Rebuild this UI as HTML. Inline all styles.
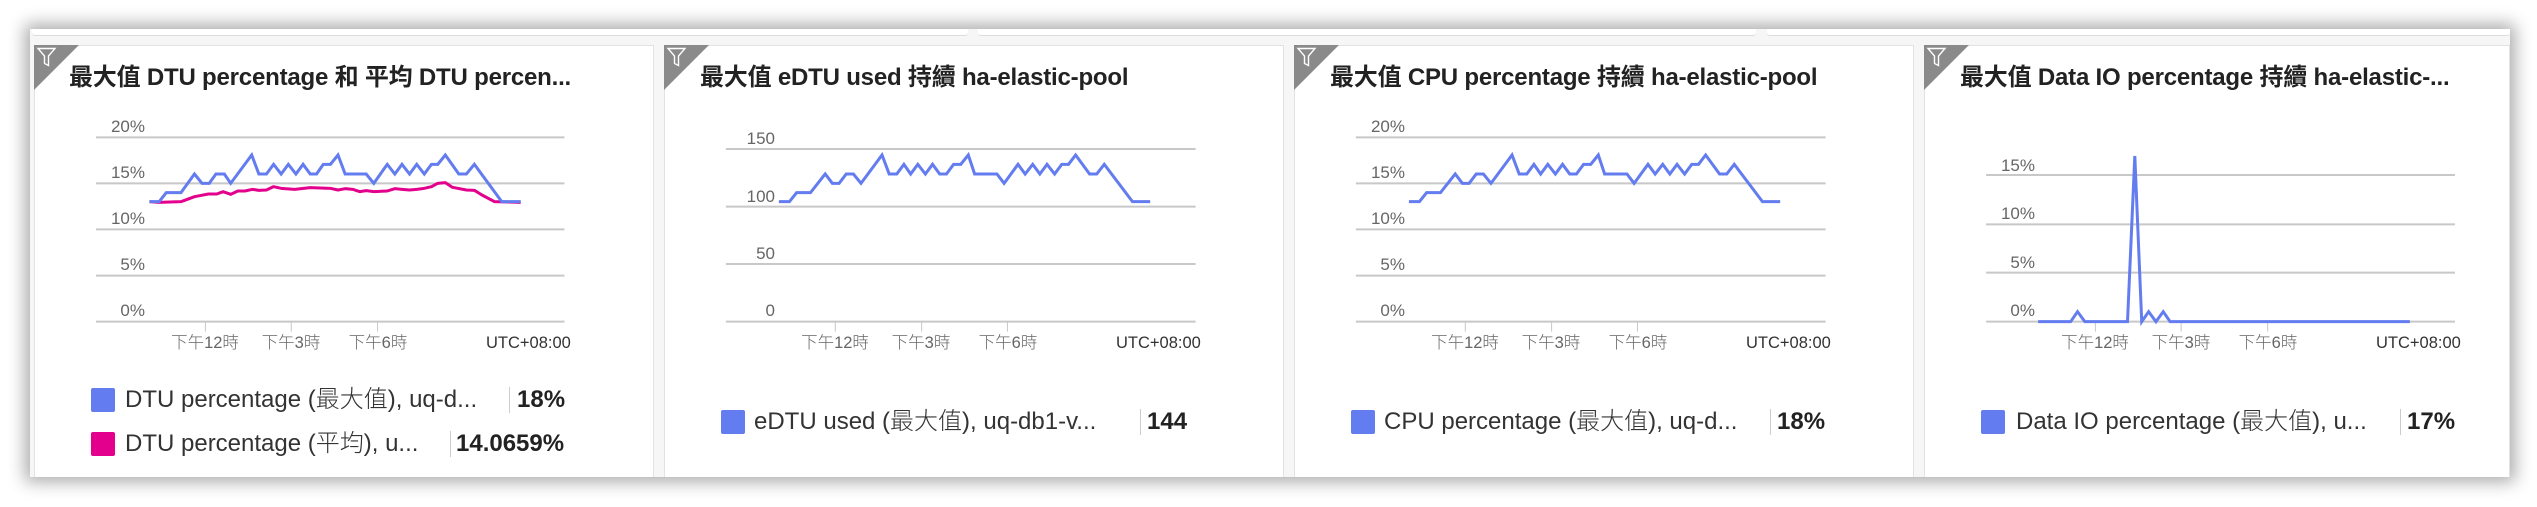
<!DOCTYPE html>
<html><head><meta charset="utf-8"><style>
*{margin:0;padding:0;box-sizing:border-box}
body{width:2537px;height:507px;background:#fff;position:relative;overflow:hidden;font-family:"Segoe UI","Liberation Sans","Noto Sans CJK TC",sans-serif}
.cont{position:absolute;left:30px;top:29px;width:2480px;height:448px;background:#f6f6f6;box-shadow:0 0 16px 5px rgba(0,0,0,.33)}
.topbar{position:absolute;top:29px;height:7px;background:#fff;border-bottom:1px solid #dcdcdc;border-radius:0 0 3px 3px}
.card{position:absolute;top:45px;height:432px;background:#fff;border:1px solid #e2e2e2;border-bottom:none}
.t{position:absolute;white-space:nowrap;color:#222;line-height:1}
.title{font-size:24px;font-weight:600;top:66px;letter-spacing:-0.2px}
.yl{font-size:17px;color:#666;text-align:right;width:60px;font-weight:300}
.xl{font-size:16.5px;color:#666;font-weight:300;transform:translateX(-50%)}
.utc{font-size:16.5px;color:#333;font-weight:300}
.lg{font-size:24px;color:#333;font-weight:300}
.val{font-size:24px;font-weight:600;color:#222}
.sw{position:absolute;width:24px;height:24px;border-radius:2px}
.sep{position:absolute;width:1px;height:26px;background:#ccc}
svg{position:absolute}
</style></head><body>
<div class="cont"></div>
<div class="topbar" style="left:32px;width:936px"></div>
<div class="topbar" style="left:978px;width:778px"></div>
<div class="topbar" style="left:1767px;width:743px"></div>

<div class="card" style="left:34px;width:620px"></div>
<div class="card" style="left:664px;width:620px"></div>
<div class="card" style="left:1294px;width:620px"></div>
<div class="card" style="left:1924px;width:586px"></div>

<svg style="left:34px;top:45px" width="46" height="46" viewBox="0 0 46 46"><path d="M0 0H45L0 45Z" fill="#8a8a8a"/><path d="M4 3.5H21L14.5 11V20.5L10.5 18.5V11Z" fill="none" stroke="#fff" stroke-width="1.4"/></svg>
<svg style="left:664px;top:45px" width="46" height="46" viewBox="0 0 46 46"><path d="M0 0H45L0 45Z" fill="#8a8a8a"/><path d="M4 3.5H21L14.5 11V20.5L10.5 18.5V11Z" fill="none" stroke="#fff" stroke-width="1.4"/></svg>
<svg style="left:1294px;top:45px" width="46" height="46" viewBox="0 0 46 46"><path d="M0 0H45L0 45Z" fill="#8a8a8a"/><path d="M4 3.5H21L14.5 11V20.5L10.5 18.5V11Z" fill="none" stroke="#fff" stroke-width="1.4"/></svg>
<svg style="left:1924px;top:45px" width="46" height="46" viewBox="0 0 46 46"><path d="M0 0H45L0 45Z" fill="#8a8a8a"/><path d="M4 3.5H21L14.5 11V20.5L10.5 18.5V11Z" fill="none" stroke="#fff" stroke-width="1.4"/></svg>

<svg style="left:0;top:0" width="660" height="507" viewBox="0 0 1568 1521" preserveAspectRatio="none">
<path vector-effect="non-scaling-stroke" stroke="#c8c8c8" stroke-width="2" fill="none" d="M228 412H1341M228 550H1341M228 688H1341M228 827H1341M228 965H1341"/>
<path vector-effect="non-scaling-stroke" stroke="#c8c8c8" stroke-width="1" fill="none" d="M488 965V995M692 965V995M897 965V995"/>
<polyline vector-effect="non-scaling-stroke" fill="none" stroke="#e3008c" stroke-width="3" stroke-linejoin="round" points="355,605 378,607 430,605 462,590 495,582 515,582 530,575 548,583 565,573 582,573 600,568 615,571 633,570 650,560 668,565 700,568 737,563 785,565 803,570 820,566 838,568 855,575 870,572 888,575 920,573 938,566 955,568 973,570 990,568 1008,565 1025,560 1040,550 1058,548 1075,562 1108,570 1127,571 1145,585 1175,605 1237,607"/>
<polyline vector-effect="non-scaling-stroke" fill="none" stroke="#637cef" stroke-width="3" points="355,605 378,605 395,578 430,578 462,522 480,550 497,550 513,522 533,522 548,550 598,465 615,522 633,522 650,493 668,522 685,493 703,522 720,493 737,522 752,522 768,493 785,493 803,465 820,522 870,522 888,550 920,493 938,522 955,493 973,522 990,493 1008,522 1025,493 1040,493 1058,465 1090,522 1108,522 1127,493 1192,605 1237,605"/>
</svg>

<svg style="left:640px;top:0" width="660" height="507" viewBox="0 0 1568 1521" preserveAspectRatio="none">
<path vector-effect="non-scaling-stroke" stroke="#c8c8c8" stroke-width="2" fill="none" d="M204 447H1320M204 620H1320M204 792H1320M204 965H1320"/>
<path vector-effect="non-scaling-stroke" stroke="#c8c8c8" stroke-width="1" fill="none" d="M464 965V995M669 965V995M873 965V995"/>
<polyline vector-effect="non-scaling-stroke" fill="none" stroke="#637cef" stroke-width="3" points="330,605 355,605 372,578 405,578 440,522 457,550 473,550 490,522 507,522 525,550 575,465 592,522 610,522 627,493 643,522 660,493 678,522 695,493 712,522 728,522 745,493 762,493 780,465 795,522 848,522 865,550 898,493 915,522 933,493 950,522 967,493 985,522 1002,493 1018,493 1035,465 1068,522 1085,522 1103,493 1170,605 1212,605"/>
</svg>

<svg style="left:1270px;top:0" width="660" height="507" viewBox="0 0 1568 1521" preserveAspectRatio="none">
<path vector-effect="non-scaling-stroke" stroke="#c8c8c8" stroke-width="2" fill="none" d="M204 412H1320M204 550H1320M204 688H1320M204 827H1320M204 965H1320"/>
<path vector-effect="non-scaling-stroke" stroke="#c8c8c8" stroke-width="1" fill="none" d="M464 965V995M669 965V995M873 965V995"/>
<polyline vector-effect="non-scaling-stroke" fill="none" stroke="#637cef" stroke-width="3" points="330,605 355,605 372,578 405,578 440,522 457,550 473,550 490,522 507,522 525,550 575,465 592,522 610,522 627,493 643,522 660,493 678,522 695,493 712,522 728,522 745,493 762,493 780,465 795,522 848,522 865,550 898,493 915,522 933,493 950,522 967,493 985,522 1002,493 1018,493 1035,465 1068,522 1085,522 1103,493 1170,605 1212,605"/>
</svg>

<svg style="left:1900px;top:0" width="637" height="507" viewBox="0 0 1568 1521" preserveAspectRatio="none">
<path vector-effect="non-scaling-stroke" stroke="#c8c8c8" stroke-width="2" fill="none" d="M212 525H1366M212 673H1366M212 818H1366M212 965H1366"/>
<path vector-effect="non-scaling-stroke" stroke="#c8c8c8" stroke-width="1" fill="none" d="M481 965V995M692 965V995M905 965V995"/>
<polyline vector-effect="non-scaling-stroke" fill="none" stroke="#637cef" stroke-width="3" points="340,965 420,965 437,935 455,965 560,965 578,468 595,965 612,935 630,965 648,935 665,965 1255,965"/>
</svg>

<!-- Card 1 -->
<div class="t title" style="left:69px">最大值 DTU percentage 和 平均 DTU percen...</div>
<div class="t yl" style="left:85px;top:118px">20%</div>
<div class="t yl" style="left:85px;top:164px">15%</div>
<div class="t yl" style="left:85px;top:210px">10%</div>
<div class="t yl" style="left:85px;top:256px">5%</div>
<div class="t yl" style="left:85px;top:302px">0%</div>
<div class="t xl" style="left:205px;top:335px">下午12時</div>
<div class="t xl" style="left:291px;top:335px">下午3時</div>
<div class="t xl" style="left:378px;top:335px">下午6時</div>
<div class="t utc" style="left:486px;top:335px">UTC+08:00</div>
<div class="sw" style="left:91px;top:388px;background:#637cef"></div>
<div class="t lg" style="left:125px;top:388px">DTU percentage (最大值), uq-d...</div>
<div class="sep" style="left:509px;top:387px"></div>
<div class="t val" style="left:517px;top:388px">18%</div>
<div class="sw" style="left:91px;top:432px;background:#e3008c"></div>
<div class="t lg" style="left:125px;top:432px">DTU percentage (平均), u...</div>
<div class="sep" style="left:450px;top:431px"></div>
<div class="t val" style="left:456px;top:432px">14.0659%</div>

<!-- Card 2 -->
<div class="t title" style="left:700px">最大值 eDTU used 持續 ha-elastic-pool</div>
<div class="t yl" style="left:715px;top:130px">150</div>
<div class="t yl" style="left:715px;top:188px">100</div>
<div class="t yl" style="left:715px;top:245px">50</div>
<div class="t yl" style="left:715px;top:302px">0</div>
<div class="t xl" style="left:835px;top:335px">下午12時</div>
<div class="t xl" style="left:921px;top:335px">下午3時</div>
<div class="t xl" style="left:1008px;top:335px">下午6時</div>
<div class="t utc" style="left:1116px;top:335px">UTC+08:00</div>
<div class="sw" style="left:721px;top:410px;background:#637cef"></div>
<div class="t lg" style="left:754px;top:410px">eDTU used (最大值), uq-db1-v...</div>
<div class="sep" style="left:1140px;top:409px"></div>
<div class="t val" style="left:1147px;top:410px">144</div>

<!-- Card 3 -->
<div class="t title" style="left:1330px">最大值 CPU percentage 持續 ha-elastic-pool</div>
<div class="t yl" style="left:1345px;top:118px">20%</div>
<div class="t yl" style="left:1345px;top:164px">15%</div>
<div class="t yl" style="left:1345px;top:210px">10%</div>
<div class="t yl" style="left:1345px;top:256px">5%</div>
<div class="t yl" style="left:1345px;top:302px">0%</div>
<div class="t xl" style="left:1465px;top:335px">下午12時</div>
<div class="t xl" style="left:1551px;top:335px">下午3時</div>
<div class="t xl" style="left:1638px;top:335px">下午6時</div>
<div class="t utc" style="left:1746px;top:335px">UTC+08:00</div>
<div class="sw" style="left:1351px;top:410px;background:#637cef"></div>
<div class="t lg" style="left:1384px;top:410px">CPU percentage (最大值), uq-d...</div>
<div class="sep" style="left:1770px;top:409px"></div>
<div class="t val" style="left:1777px;top:410px">18%</div>

<!-- Card 4 -->
<div class="t title" style="left:1960px">最大值 Data IO percentage 持續 ha-elastic-...</div>
<div class="t yl" style="left:1975px;top:157px">15%</div>
<div class="t yl" style="left:1975px;top:205px">10%</div>
<div class="t yl" style="left:1975px;top:254px">5%</div>
<div class="t yl" style="left:1975px;top:302px">0%</div>
<div class="t xl" style="left:2095px;top:335px">下午12時</div>
<div class="t xl" style="left:2181px;top:335px">下午3時</div>
<div class="t xl" style="left:2268px;top:335px">下午6時</div>
<div class="t utc" style="left:2376px;top:335px">UTC+08:00</div>
<div class="sw" style="left:1981px;top:410px;background:#637cef"></div>
<div class="t lg" style="left:2016px;top:410px">Data IO percentage (最大值), u...</div>
<div class="sep" style="left:2400px;top:409px"></div>
<div class="t val" style="left:2407px;top:410px">17%</div>
</body></html>
